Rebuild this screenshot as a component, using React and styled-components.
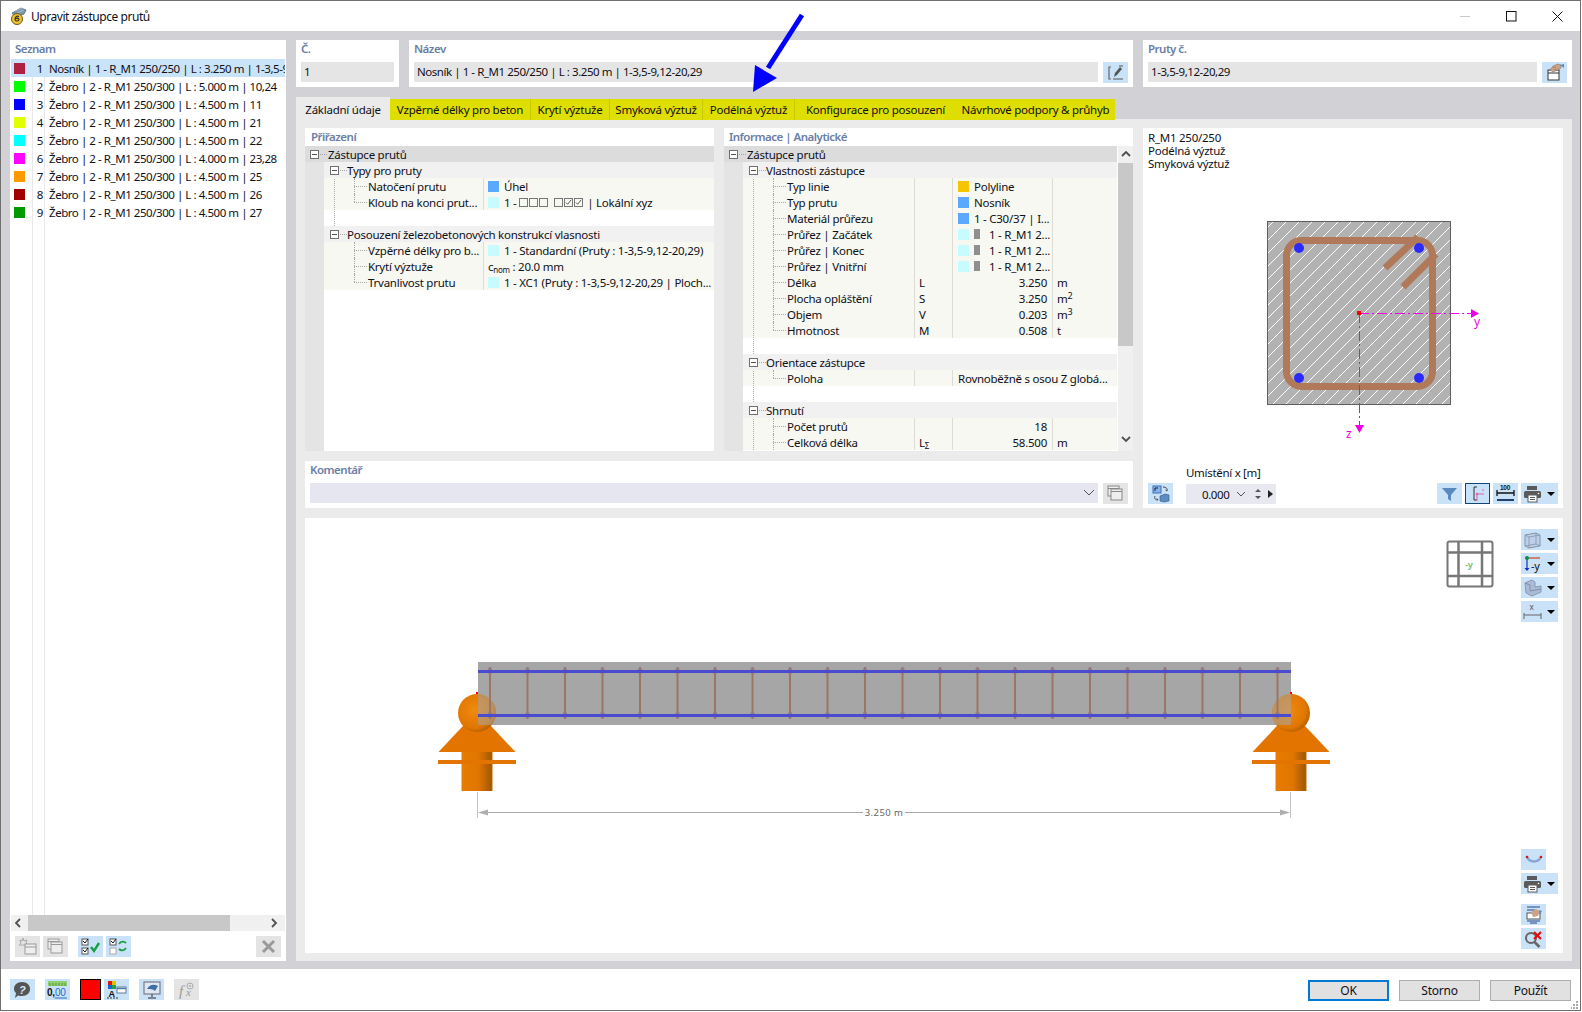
import React from "react";
import styled, { createGlobalStyle } from "styled-components";

const Global = createGlobalStyle`
  html, body { margin: 0; padding: 0; background: #fff; }
  body { font-family: "Noto Sans", "Open Sans", sans-serif; font-size: 11.5px; letter-spacing: -0.25px; color: #101018; }
  * { box-sizing: border-box; }
`;

const Win = styled.div`
  position: relative;
  width: 1581px;
  height: 1011px;
  border: 1px solid #6f6f6f;
  background: #fff;
  display: flex;
  flex-direction: column;
  overflow: hidden;
`;
const TitleBar = styled.header`
  height: 30px;
  display: flex;
  align-items: center;
  padding-left: 8px;
  gap: 4px;
  font-size: 12px;
  letter-spacing: -0.45px;
  flex: none;
`;
const WinBtns = styled.div`
  margin-left: auto;
  display: flex;
`;
const WinBtn = styled.div`
  width: 46px;
  height: 30px;
  display: flex;
  align-items: center;
  justify-content: center;
`;
const Body = styled.main`
  flex: 1;
  min-height: 0;
  background: #d1d1d6;
  padding: 9px 8px 8px 9px;
  display: grid;
  grid-template-columns: 276px 1fr;
  gap: 10px;
`;
const ListPanel = styled.section`
  background: #fff;
  display: flex;
  flex-direction: column;
  min-height: 0;
  padding: 0 1px;
`;
const Heading = styled.div`
  font-weight: 600;
  font-size: 11.5px;
  letter-spacing: -0.5px;
  color: #6a7ea6;
  height: ${(p) => p.$h || 22}px;
  line-height: ${(p) => p.$lh || p.$h || 18}px;
  padding-left: ${(p) => p.$pad ?? 0}px;
  flex: none;
`;
const ListBody = styled.div`
  flex: 1;
  min-height: 0;
  background-image: linear-gradient(#e8e8e8, #e8e8e8), linear-gradient(#e8e8e8, #e8e8e8);
  background-size: 1px 100%, 1px 100%;
  background-repeat: no-repeat;
  background-position: 21px 0, 33px 0;
  overflow: hidden;
`;
const ListRow = styled.div`
  height: 18px;
  display: grid;
  grid-template-columns: 22px 10px 1fr;
  align-items: center;
  white-space: nowrap;
  overflow: hidden;
  background: ${(p) => (p.$sel ? "#c9e3f8" : "transparent")};
`;
const ColorChip = styled.span`
  width: 11px;
  height: 11px;
  margin-left: 3px;
  background: ${(p) => p.$c};
`;
const ListNum = styled.span`
  text-align: right;
`;
const ListText = styled.span`
  padding-left: 6px;
  overflow: hidden;
  letter-spacing: -0.45px;
`;
const HScroll = styled.div`
  height: 16px;
  flex: none;
  background: #f0f0f0;
  display: flex;
  align-items: center;
  justify-content: space-between;
  padding: 0 4px;
  position: relative;
`;
const HThumb = styled.div`
  position: absolute;
  left: 17px;
  top: 0;
  width: 202px;
  height: 16px;
  background: #c8c8c8;
`;
const ListTools = styled.div`
  flex: none;
  height: 30px;
  padding: 5px 4px 4px;
  display: flex;
  gap: 3px;
`;
const Tool = styled.div`
  flex: none;
  width: ${(p) => (p.$wide ? 37 : 25)}px;
  height: 21px;
  background: ${(p) => (p.$muted ? "#e4e4e4" : "#c9e2f7")};
  border: ${(p) => (p.$on ? "1px solid #11457e" : "none")};
  margin-left: ${(p) => p.$ml || 0}px;
  margin-top: ${(p) => p.$mt || 0}px;
  display: flex;
  align-items: center;
  justify-content: ${(p) => (p.$wide ? "flex-start" : "center")};
  padding-left: ${(p) => (p.$wide ? 2 : 0)}px;
`;
const Caret = styled.span`
  width: 0;
  height: 0;
  margin-left: 5px;
  border-left: 4px solid transparent;
  border-right: 4px solid transparent;
  border-top: 4px solid #000;
`;
const MainCol = styled.div`
  display: flex;
  flex-direction: column;
  min-width: 0;
  min-height: 0;
`;
const TopRow = styled.div`
  display: grid;
  grid-template-columns: 103px 724px 429px;
  gap: 10px;
  height: 47px;
  flex: none;
`;
const Field = styled.div`
  background: #fff;
  padding: 0 5px;
`;
const FieldLine = styled.div`
  display: flex;
  gap: 5px;
  height: 21px;
`;
const Input = styled.div`
  flex: 1;
  min-width: 0;
  height: 20px;
  line-height: 20px;
  padding-left: 3px;
  letter-spacing: -0.45px;
  background: ${(p) => p.$bg || "#e5e5e5"};
  display: flex;
  align-items: center;
  justify-content: space-between;
  white-space: nowrap;
`;
const Tabs = styled.nav`
  display: flex;
  align-items: flex-end;
  height: 23px;
  margin-top: 10px;
  margin-bottom: -1px;
  flex: none;
  position: relative;
  z-index: 1;
`;
const Tab = styled.div`
  height: ${(p) => (p.$active ? 23 : 21)}px;
  width: ${(p) => p.$w}px;
  flex: none;
  line-height: ${(p) => (p.$active ? 23 : 21)}px;
  padding-top: ${(p) => (p.$active ? 1 : 0)}px;
  text-align: center;
  white-space: nowrap;
  background: ${(p) => (p.$active ? "#ebebeb" : "#dede00")};
  border-right: ${(p) => (p.$line ? "1px solid #c9c900" : "none")};
`;
const TabBody = styled.div`
  flex: 1;
  min-height: 0;
  background: #ebebeb;
  padding: 9px 9px 7px;
  display: grid;
  grid-template-rows: 380px 435px;
  gap: 10px;
`;
const UpperGrid = styled.div`
  display: grid;
  grid-template-columns: 828px 420px;
  gap: 10px;
  min-height: 0;
`;
const LeftStack = styled.div`
  display: grid;
  grid-template-rows: 323px 47px;
  gap: 10px;
  min-height: 0;
`;
const PanelPair = styled.div`
  display: grid;
  grid-template-columns: 409px 409px;
  gap: 10px;
  min-height: 0;
`;
const TreePanel = styled.section`
  background: #fff;
  display: flex;
  flex-direction: column;
  min-height: 0;
  overflow: hidden;
`;
const TreeWrap = styled.div`
  flex: 1;
  min-height: 0;
  display: flex;
`;
const TreeMain = styled.div`
  flex: 1;
  min-width: 0;
  display: flex;
  flex-direction: column;
  overflow: hidden;
`;
const RootRow = styled.div`
  height: 16px;
  flex: none;
  line-height: 15px;
  padding-top: 1px;
  background: #dcdcdc;
  display: flex;
  align-items: center;
  padding-left: 5px;
  gap: 1px;
  white-space: nowrap;
`;
const Expander = styled.span`
  width: 9px;
  height: 9px;
  border: 1px solid #707070;
  background: #fff;
  position: relative;
  flex: none;
  margin: -1px 8px 0 0;
  &::before {
    content: "";
    position: absolute;
    left: 1px;
    top: 3px;
    width: 5px;
    height: 1px;
    background: #505050;
  }
  &::after {
    content: "";
    position: absolute;
    left: 9px;
    top: 3px;
    width: 7px;
    border-top: 1px dotted #a8a8a8;
  }
`;
const Sub = styled.div`
  flex: 1;
  min-height: 0;
  background: #e4e4e4;
  padding-left: 19px;
  display: flex;
`;
const SubInner = styled.div`
  flex: 1;
  min-width: 0;
  background: #fff;
  position: relative;
  overflow: hidden;
  &::before {
    content: "";
    position: absolute;
    left: 10px;
    top: 0;
    height: ${(p) => p.$line}px;
    border-left: 1px dotted #a8a8a8;
    z-index: 1;
  }
`;
const SectionHead = styled.div`
  height: 16px;
  line-height: 15px;
  padding: 1px 0 0 6px;
  background: #f1f1f1;
  display: flex;
  align-items: center;
  white-space: nowrap;
  position: relative;
  z-index: 2;
`;
const Row = styled.div`
  height: 16px;
  display: grid;
  grid-template-columns: ${(p) => p.$cols};
  background: #f7f8f2;
  position: relative;
  white-space: nowrap;
  &::before {
    content: "";
    position: absolute;
    left: 30px;
    top: 0;
    height: ${(p) => (p.$last ? 8 : 16)}px;
    border-left: 1px dotted #a8a8a8;
  }
  &::after {
    content: "";
    position: absolute;
    left: 30px;
    top: 8px;
    width: 13px;
    border-top: 1px dotted #a8a8a8;
  }
`;
const Cell = styled.div`
  line-height: 15px;
  padding: 1px ${(p) => (p.$right ? 5 : 0)}px 0 ${(p) => p.$pl ?? 4}px;
  text-align: ${(p) => (p.$right ? "right" : "left")};
  border-right: ${(p) => (p.$noline ? "none" : "1px solid #dcdcd4")};
  display: flex;
  align-items: center;
  justify-content: ${(p) => (p.$right ? "flex-end" : "flex-start")};
  overflow: hidden;
  grid-column: ${(p) => (p.$span ? `span ${p.$span}` : "auto")};
`;
const Chip = styled.span`
  width: 11px;
  height: 11px;
  flex: none;
  background: ${(p) => p.$c};
  margin: -1px ${(p) => p.$mr ?? 5}px 0 0;
`;
const Bar = styled.span`
  width: 6px;
  height: 10px;
  flex: none;
  background: #8f8f8f;
  margin: -1px 9px 0 5px;
`;
const Gap = styled.div`
  height: 16px;
`;
const Box = styled.span`
  width: 9px;
  height: 9px;
  border: 1px solid #777;
  flex: none;
  margin-top: -1px;
  margin-right: ${(p) => p.$mr || 1}px;
  display: inline-flex;
  align-items: center;
  justify-content: center;
`;
const Small = styled.span`
  font-size: ${(p) => (p.$up ? 9 : 8)}px;
  position: relative;
  top: ${(p) => (p.$up ? -4 : 2)}px;
`;
const VScroll = styled.div`
  width: 15px;
  margin-left: 1px;
  flex: none;
  background: #f0f0f0;
  display: flex;
  flex-direction: column;
  align-items: center;
  justify-content: space-between;
  position: relative;
  padding: 5px 0 5px;
`;
const VThumb = styled.div`
  position: absolute;
  left: 0;
  top: 17px;
  width: 15px;
  height: 183px;
  background: #c8c8c8;
`;
const Preview = styled.section`
  background: #fff;
  display: flex;
  flex-direction: column;
  min-height: 0;
`;
const Caption = styled.div`
  padding: 3px 5px 0;
  line-height: 13px;
  height: 43px;
  flex: none;
`;
const Drawing = styled.svg`
  display: block;
  width: 420px;
  height: 295px;
  flex: none;
`;
const PreviewFoot = styled.div`
  height: 42px;
  min-height: 0;
  flex: none;
  display: flex;
  align-items: flex-end;
  padding: 0 5px 4px;
`;
const SpinWrap = styled.div`
  margin-left: 13px;
  display: flex;
  flex-direction: column;
`;
const SpinLabel = styled.div`
  line-height: 17px;
  height: 20px;
  letter-spacing: -0.3px;
`;
const Spin = styled.div`
  width: 90px;
  height: 20px;
  background: #e8e8f0;
  display: flex;
  align-items: center;
  padding-left: 16px;
  gap: 8px;
  letter-spacing: -0.4px;
`;
const FootTools = styled.div`
  margin-left: auto;
  display: flex;
  gap: 3px;
`;
const ViewPanel = styled.section`
  background: #fff;
  position: relative;
  min-height: 0;
`;
const BeamSvg = styled.svg`
  display: block;
  width: 1258px;
  height: 435px;
`;
const FloatTools = styled.div`
  position: absolute;
  right: 5px;
  ${(p) => (p.$bottom ? "bottom: 4px;" : "top: 11px;")}
  display: flex;
  flex-direction: column;
  gap: 3px;
  width: 37px;
`;
const CubeFloat = styled.svg`
  position: absolute;
  left: 1141px;
  top: 22px;
`;
const Footer = styled.footer`
  height: 41px;
  flex: none;
  display: flex;
  align-items: flex-start;
  padding: 10px 9px 0 9px;
  position: relative;
`;
const FootLeft = styled.div`
  display: flex;
  gap: 10px;
`;
const RedSwatch = styled.div`
  width: 21px;
  height: 21px;
  background: #ff0000;
  border: 1px solid #000;
  margin-right: -7px;
`;
const FootRight = styled.div`
  margin-left: auto;
  display: flex;
  gap: 10px;
  margin-top: 1px;
`;
const DlgBtn = styled.div`
  width: 81px;
  height: 21px;
  background: #e1e1e1;
  border: ${(p) => (p.$primary ? "2px solid #0078d7" : "1px solid #adadad")};
  font-size: 12px;
  display: flex;
  align-items: center;
  justify-content: center;
`;
const Grip = styled.svg`
  position: absolute;
  right: 1px;
  bottom: 1px;
`;
const ArrowLayer = styled.svg`
  position: absolute;
  left: 0;
  top: 0;
  pointer-events: none;
  z-index: 5;
`;

/* ---- icons ---- */
const S = ({ w = 21, h = 19, children }) => (
  <svg width={w} height={h} viewBox={`0 0 ${w} ${h}`} fill="none">{children}</svg>
);
const Chev = ({ d, c = "#505050" }) => {
  const p = { l: "M5 1 1 5l4 4", r: "M1 1l4 4-4 4", u: "M1 5l4-4 4 4", d: "M1 1l4 4 4-4" }[d];
  return <svg width="10" height="10" viewBox="0 0 10 10" fill="none" style={{ flex: "none" }}><path d={p} stroke={c} strokeWidth="1.8" /></svg>;
};
const AppIcon = () => (
  <svg width="18" height="18" viewBox="0 0 18 18" fill="none" style={{ flex: "none" }}>
    <path d="M3 6 12 1l5 2-2 4-9 3z" fill="#7d97ad" stroke="#3c5a70" strokeWidth=".7" />
    <path d="M6 4l8-3M8 6l7-3" stroke="#c8d6e2" strokeWidth=".6" />
    <circle cx="8" cy="12" r="5.500" fill="#f0c22c" stroke="#6e5a18" />
    <path d="M10 9.500c-2.500-1-4 .5-4 3 0 2 4 2 4 0s-3-1.500-4-.5" stroke="#2a2a2a" strokeWidth="1.100" />
  </svg>
);
const EditIco = () => (
  <S><path d="M6 4H4v12h2" stroke="#666" strokeWidth="1.2" /><path d="M9 14l1-4 5-6 2 2-5 6z" fill="#555" /><path d="M8 16h10M14 3h4" stroke="#555" /></S>
);
const HandIco = () => (
  <S>
    <rect x="4" y="7" width="11" height="10" fill="#fff" stroke="#333" />
    <path d="M4 10h11" stroke="#333" />
    <path d="M6 7l3-4 5-2 3 1v3l-3 2-5 2z" fill="#c9a48a" stroke="#7a6656" strokeWidth=".5" />
    <path d="M9 5l3-1M10 7l3-1" stroke="#7a6656" strokeWidth=".5" />
    <path d="M16 2l4-1v4z" fill="#5c84c8" />
  </S>
);
const CopyIco = ({ c = "#9a9a9a" }) => (
  <S><rect x="3" y="2" width="11" height="10" fill="#eee" stroke={c} /><rect x="6" y="5" width="11" height="11" fill="#eee" stroke={c} /><path d="M3 4.500h11M6 7.500h11" stroke={c} /></S>
);
const NewIco = () => (
  <S><path d="M6 1l1 3 3-1-1 3 2 2H2l2-2-1-3 2 1z" fill="none" stroke="#aaa" /><rect x="8" y="7" width="11" height="10" fill="#eee" stroke="#999" /><path d="M8 10h11" stroke="#999" /></S>
);
const CheckPair = ({ swap }) => (
  <S>
    <rect x="2" y="2" width="6" height="6" fill="#fff" stroke="#555" />
    <path d="M3 4l2 2 3-4" stroke="#111" />
    <rect x="2" y="11" width="6" height="6" fill="#fff" stroke={swap ? "#aaa" : "#555"} />
    {!swap && <path d="M3 13l2 2 3-4" stroke="#111" />}
    {swap ? <path d="M11 7c2-3 5-3 7-1M18 11c-2 3-5 3-7 1" stroke="#19a040" strokeWidth="1.800" /> : <path d="M11 10l3 4 5-8" stroke="#19a040" strokeWidth="2.400" />}
  </S>
);
const XIco = () => (
  <S><path d="M5 4l11 11M16 4 5 15" stroke="#9a9a9a" strokeWidth="3" /></S>
);
const SwapIco = () => (
  <S>
    <rect x="3" y="2" width="8" height="7" fill="#8ab0e8" stroke="#3f6fb8" />
    <path d="M5 7V4h3" stroke="#123" />
    <path d="M13 3c3 0 5 2 4 4l-1.500-1M5 12c-1 2 0 4 3 4l-1-1.500" stroke="#444" />
    <path d="M10 12l5-2 4 1v6l-5 1-4-1z" fill="#5e8cc0" stroke="#34597f" strokeWidth=".6" />
  </S>
);
const FunnelIco = () => (
  <S><path d="M3 4h15l-6 7v6l-3-2v-4z" fill="#5b88c0" /></S>
);
const AxisIco = () => (
  <S><path d="M10 3H7v13h3" stroke="#333" /><path d="M10 10h7M10 10v7" stroke="#e35fb0" /><path d="M16 5v2" stroke="#e35fb0" /><circle cx="10" cy="10" r="1.200" fill="#e35fb0" /></S>
);
const DimIco = () => (
  <svg width="21" height="19" viewBox="0 0 21 19" fill="none">
    <text x="5" y="6" fontSize="6.500" fontWeight="700" fill="#111" fontFamily="Liberation Sans, sans-serif">100</text>
    <path d="M2 9h17M2 6v6M19 6v6" stroke="#111" strokeWidth="1.300" />
    <path d="M2 16h17" stroke="#24406e" strokeWidth="2" />
  </svg>
);
const PrintIco = () => (
  <svg width="19" height="18" viewBox="0 0 19 18" fill="none" style={{ flex: "none" }}>
    <rect x="4" y="1" width="10" height="4" fill="#5a5a5a" />
    <rect x="1" y="6" width="17" height="7" rx="1.500" fill="#5a5a5a" />
    <rect x="5" y="10" width="9" height="7" fill="#fff" stroke="#5a5a5a" />
    <path d="M7 12.500h5M7 14.500h5" stroke="#5a5a5a" />
    <circle cx="15.500" cy="8.500" r=".8" fill="#fff" />
  </svg>
);
const CubeIco = () => (
  <svg width="19" height="18" viewBox="0 0 19 18" fill="none" style={{ flex: "none" }}>
    <path d="M2 4l11-2 4 2v11l-11 2-4-2z" fill="#b4c4de" fillOpacity=".6" stroke="#8494ac" />
    <path d="M2 4l4 2 11-2M6 6v11M2 15l11-2 4 2M13 2v11" stroke="#8494ac" strokeWidth=".8" />
  </svg>
);
const AxisYIco = () => (
  <svg width="19" height="18" viewBox="0 0 19 18" style={{ flex: "none" }}>
    <path d="M4 3h13" stroke="#d0401c" strokeWidth="1.200" />
    <path d="M4 3v12" stroke="#1030c0" strokeWidth="1.200" />
    <circle cx="4" cy="3" r="2" fill="#108c40" />
    <path d="M1.500 13h5L4 16z" fill="#1030c0" />
    <text x="8" y="15" fontSize="11" fill="#111" fontFamily="Noto Sans, sans-serif">-y</text>
  </svg>
);
const SolidIco = () => (
  <svg width="19" height="18" viewBox="0 0 19 18" fill="none" style={{ flex: "none" }}>
    <path d="M2 4l7-3 3 2v5l6-1v6l-9 4-6-3z" fill="#a9bbd6" stroke="#8a9ab4" />
    <path d="M2 4l5 2v6M7 12l11-2" stroke="#7f90aa" />
  </svg>
);
const DimXIco = () => (
  <svg width="19" height="18" viewBox="0 0 19 18" fill="none" style={{ flex: "none" }}>
    <text x="6.500" y="7" fontSize="8" fill="#555" fontFamily="Noto Sans, sans-serif">x</text>
    <path d="M1 10v6M18 10v6M1 12h17" stroke="#666" />
  </svg>
);
const BendIco = () => (
  <S><path d="M4 7c3 6 11 6 14 0" stroke="#8aa4d4" strokeWidth="2.500" /><circle cx="4" cy="7" r="1.300" fill="#d01818" /><circle cx="18" cy="7" r="1.300" fill="#d01818" /></S>
);
const HandLinesIco = () => (
  <S><path d="M4 2h13M4 5h8M4 16h13M7 18h7" stroke="#24408a" /><rect x="4" y="8" width="13" height="6" fill="#fff" stroke="#555" /><path d="M8 7l5-3 4 2-2 5-5 1z" fill="#c9a48a" /><path d="M16 5l3 1-2 3z" fill="#5c84c8" /></S>
);
const ZoomXIco = () => (
  <S><circle cx="8" cy="9" r="5" fill="none" stroke="#666" strokeWidth="2" /><path d="M11.500 13l5 5" stroke="#666" strokeWidth="2.500" /><path d="M11 3l7 7M18 3l-7 7" stroke="#e01010" strokeWidth="2.200" /></S>
);
const HelpIco = () => (
  <svg width="21" height="19" viewBox="0 0 21 19">
    <path d="M10 2c5 0 8 3 8 7s-3 7-8 7c-1 0-3 0-4-.5L3 18l1-5C3 12 2 11 2 9c0-4 3-7 8-7z" fill="#555" />
    <text x="7" y="13.500" fontSize="11" fontWeight="700" fontStyle="italic" fill="#d8e8f4" fontFamily="Liberation Sans, sans-serif">?</text>
  </svg>
);
const NumIco = () => (
  <svg width="21" height="19" viewBox="0 0 21 19">
    <rect x="1" y="1" width="19" height="5" fill="#8fce6c" />
    <path d="M3 3v3M6 3v3M9 3v3M12 3v3M15 3v3M18 3v3" stroke="#5a9a40" />
    <text x="0" y="16" fontSize="10" fontWeight="700" fill="#111" fontFamily="Liberation Sans, sans-serif">0,</text>
    <text x="8" y="16" fontSize="10" fill="#2a6ad0" fontFamily="Liberation Sans, sans-serif">00</text>
    <path d="M8 18h12" stroke="#2a6ad0" />
  </svg>
);
const PaletteIco = () => (
  <svg width="21" height="19" viewBox="0 0 21 19">
    <rect x="2" y="1" width="4" height="4" fill="#d81818" />
    <rect x="6" y="1" width="4" height="4" fill="#e8c000" />
    <rect x="2" y="5" width="4" height="4" fill="#2060d0" />
    <rect x="6" y="5" width="4" height="4" fill="#20a040" />
    <rect x="11" y="7" width="9" height="6" fill="#fff" stroke="#5a7aa0" />
    <path d="M11 8.500h9" stroke="#5a7aa0" strokeWidth="1.500" />
    <text x="2.500" y="17" fontSize="9" fontWeight="700" fill="#111" fontFamily="Liberation Sans, sans-serif">A</text>
    <path d="M1 18h11" stroke="#333" strokeDasharray="2 1" />
  </svg>
);
const MonitorIco = () => (
  <S>
    <rect x="3" y="2" width="16" height="12" fill="#dfe8f2" stroke="#667" />
    <path d="M6 9c3-5 7-5 11-3l-3 5c-2-2-5-2-8-2z" fill="#3f6ea4" />
    <path d="M11 14v3M7 18h8" stroke="#667" strokeWidth="1.500" />
  </S>
);
const FxIco = () => (
  <svg width="21" height="19" viewBox="0 0 21 19">
    <text x="3" y="16" fontSize="15" fontStyle="italic" fontFamily="Liberation Serif, serif" fill="#999">f</text>
    <text x="10" y="16" fontSize="11" fontStyle="italic" fontFamily="Liberation Serif, serif" fill="#999">x</text>
    <circle cx="14" cy="6" r="3" fill="none" stroke="#aaa" />
    <circle cx="14" cy="6" r="1" fill="#aaa" />
  </svg>
);
const Tick = () => (
  <svg width="7" height="7" viewBox="0 0 8 8" fill="none" style={{ flex: "none" }}><path d="M1 4l2 2 4-5" stroke="#444" strokeWidth="1" /></svg>
);

/* ---- data ---- */
const members = [
  ["#b02040", "Nosník | 1 - R_M1 250/250 | L : 3.250 m | 1-3,5-9,12-20,29"],
  ["#00ff00", "Žebro | 2 - R_M1 250/300 | L : 5.000 m | 10,24"],
  ["#0000ff", "Žebro | 2 - R_M1 250/300 | L : 4.500 m | 11"],
  ["#e0ff00", "Žebro | 2 - R_M1 250/300 | L : 4.500 m | 21"],
  ["#00ffff", "Žebro | 2 - R_M1 250/300 | L : 4.500 m | 22"],
  ["#ff00ff", "Žebro | 2 - R_M1 250/300 | L : 4.000 m | 23,28"],
  ["#ff9900", "Žebro | 2 - R_M1 250/300 | L : 4.500 m | 25"],
  ["#a00000", "Žebro | 2 - R_M1 250/300 | L : 4.500 m | 26"],
  ["#009900", "Žebro | 2 - R_M1 250/300 | L : 4.500 m | 27"],
];
const tabs = [
  ["Vzpěrné délky pro beton", 141, 1],
  ["Krytí výztuže", 79, 1],
  ["Smyková výztuž", 93, 1],
  ["Podélná výztuž", 92, 1],
  ["Konfigurace pro posouzení", 161, 0],
  ["Návrhové podpory & průhyb", 159, 0],
];
const LCOLS = "160px 1fr";
const ICOLS = "172px 38px 100px 1fr";
const BLUE = "#5aa9ff";
const CYAN = "#c8fbfd";

const LabelCell = ({ children }) => <Cell $pl={44}>{children}</Cell>;

const InfoRow = ({ label, sym, val, unit, chip, bar, last, left, wide }) => (
  <Row $cols={ICOLS} $last={last}>
    <LabelCell>{label}</LabelCell>
    <Cell>{sym}</Cell>
    {left ? (
      <Cell $pl={5} $span={wide ? 2 : 0} $noline={wide}>
        {chip && <Chip $c={chip} />}
        {bar && <><Chip $c={CYAN} $mr={0} /><Bar /></>}
        {val}
      </Cell>
    ) : (
      <Cell $right>{val}</Cell>
    )}
    {!wide && <Cell $noline>{unit}</Cell>}
  </Row>
);

const Beam = () => {
  const X = Array.from({ length: 22 }, (_, i) => 490 + 37.5 * i);
  const support = (cx) => (
    <g key={cx}>
      <path d={`M${cx - 38.500} 752H${cx + 38.500}L${cx} 711z`} fill="#e37400" />
      <rect x={cx - 15.500} y="752" width="31" height="39" fill={`url(#shaft)`} />
      <rect x={cx - 39} y="760" width="78" height="4" fill="#e37400" />
      <circle cx={cx} cy="713" r="19" fill="url(#ball)" />
      <rect x={cx - 1} y="692" width="2" height="2" fill="#ff0000" />
    </g>
  );
  return (
    <BeamSvg viewBox="305 518 1258 435">
      <defs>
        <linearGradient id="shaft" x1="0" x2="1" y1="0" y2="0">
          <stop offset="0" stopColor="#e87c00" />
          <stop offset=".55" stopColor="#e07600" />
          <stop offset=".95" stopColor="#a45800" />
          <stop offset="1" stopColor="#c06800" />
        </linearGradient>
        <radialGradient id="ball" cx=".42" cy=".42" r=".6">
          <stop offset="0" stopColor="#f08a10" />
          <stop offset=".8" stopColor="#e07600" />
          <stop offset="1" stopColor="#b86200" />
        </radialGradient>
        <clipPath id="bm"><rect x="478" y="662" width="813" height="63" /></clipPath>
      </defs>
      <rect x="478" y="662" width="813" height="63" fill="#a6a6a6" />
      {support(477)}
      {support(1291)}
      <g clipPath="url(#bm)">
        <circle cx="477" cy="713" r="19" fill="#a6a6a6" opacity=".55" />
        <circle cx="1291" cy="713" r="19" fill="#a6a6a6" opacity=".55" />
      </g>
      {X.map((x) => (
        <g key={x}>
          <path d={`M${x} 667V719`} stroke="#9c7664" strokeWidth="2" />
          <path d={`M${x - 2} 671h4M${x - 2} 715h4`} stroke="#8d7a86" strokeWidth="5" />
        </g>
      ))}
      <path d="M478 671.500H1291M478 715.500H1291" stroke="#4b4bcf" strokeWidth="3" />
      <path d="M477.500 792V818M1290.500 792V818" stroke="#c4c4c4" />
      <path d="M482 812.500H1286" stroke="#a8a8a8" />
      <path d="M478 812.500l10-3v6zM1290 812.500l-10-3v6z" fill="#b0b0b0" />
      <rect x="863" y="805" width="42" height="14" fill="#fff" />
      <text x="884" y="816" textAnchor="middle" fontSize="9.500" letterSpacing=".4" fill="#666" fontFamily="Noto Sans, sans-serif">3.250 m</text>
    </BeamSvg>
  );
};

const SectionView = () => (
  <Drawing viewBox="1143 171 420 295">
    <defs>
      <pattern id="hatch" patternUnits="userSpaceOnUse" width="13" height="13">
        <rect width="13" height="13" fill="#b2b2b2" />
        <path d="M-1 14 14 -1M-1 1 1 -1M12 14l2-2" stroke="#fff" strokeWidth="1" />
      </pattern>
    </defs>
    <rect x="1267.500" y="221.500" width="183" height="183" fill="url(#hatch)" stroke="#606060" />
    <rect x="1286.500" y="240.500" width="146" height="146" rx="15" fill="none" stroke="#b07a5a" strokeWidth="7" />
    <path d="M1385 268 1418 237M1403 287 1436 254" stroke="#b07a5a" strokeWidth="7" />
    <circle cx="1299" cy="248" r="5" fill="#2a2aff" />
    <circle cx="1419" cy="248" r="5" fill="#2a2aff" />
    <circle cx="1299" cy="378" r="5" fill="#2a2aff" />
    <circle cx="1419" cy="378" r="5" fill="#2a2aff" />
    <path d="M1359 313.500H1472M1359.500 313V426" stroke="#f000e8" strokeWidth="1" strokeDasharray="10 3 2 3" />
    <path d="M1471 309v9l8-4.500zM1355 425h9l-4.500 8z" fill="#f000e8" />
    <rect x="1357" y="311" width="4" height="4" fill="#ff0000" />
    <text x="1474" y="326" fontSize="12" fill="#f000e8" fontFamily="Noto Sans, sans-serif">y</text>
    <text x="1346" y="438" fontSize="12" fill="#f000e8" fontFamily="Noto Sans, sans-serif">z</text>
  </Drawing>
);

export default function App() {
  return (
    <>
      <Global />
      <Win>
        <TitleBar>
          <AppIcon />
          Upravit zástupce prutů
          <WinBtns>
            <WinBtn><svg width="11" height="11"><path d="M0 5.500h10" stroke="#c8c8c8" /></svg></WinBtn>
            <WinBtn><svg width="11" height="11"><rect x=".5" y=".5" width="9.500" height="9.500" fill="none" stroke="#111" /></svg></WinBtn>
            <WinBtn><svg width="11" height="11"><path d="M.5.5l10 10M10.500.5l-10 10" stroke="#111" /></svg></WinBtn>
          </WinBtns>
        </TitleBar>
        <Body>
          <ListPanel>
            <Heading $h={19} $lh={17} $pad={4}>Seznam</Heading>
            <ListBody>
              {members.map(([c, t], i) => (
                <ListRow key={i} $sel={i === 0}>
                  <ColorChip $c={c} />
                  <ListNum>{i + 1}</ListNum>
                  <ListText>{t}</ListText>
                </ListRow>
              ))}
            </ListBody>
            <HScroll>
              <HThumb />
              <Chev d="l" />
              <Chev d="r" />
            </HScroll>
            <ListTools>
              <Tool $muted><NewIco /></Tool>
              <Tool $muted><CopyIco /></Tool>
              <Tool $ml={7}><CheckPair /></Tool>
              <Tool><CheckPair swap /></Tool>
              <Tool $muted $ml={122}><XIco /></Tool>
            </ListTools>
          </ListPanel>
          <MainCol>
            <TopRow>
              <Field>
                <Heading>Č.</Heading>
                <FieldLine><Input>1</Input></FieldLine>
              </Field>
              <Field>
                <Heading>Název</Heading>
                <FieldLine>
                  <Input>Nosník | 1 - R_M1 250/250 | L : 3.250 m | 1-3,5-9,12-20,29</Input>
                  <Tool><EditIco /></Tool>
                </FieldLine>
              </Field>
              <Field>
                <Heading>Pruty č.</Heading>
                <FieldLine>
                  <Input>1-3,5-9,12-20,29</Input>
                  <Tool><HandIco /></Tool>
                </FieldLine>
              </Field>
            </TopRow>
            <Tabs>
              <Tab $active $w={94}>Základní údaje</Tab>
              {tabs.map(([t, w, l]) => (
                <Tab key={t} $w={w} $line={l}>{t}</Tab>
              ))}
            </Tabs>
            <TabBody>
              <UpperGrid>
                <LeftStack>
                  <PanelPair>
                    <TreePanel>
                      <Heading $h={18} $pad={6}>Přiřazení</Heading>
                      <TreeMain>
                        <RootRow><Expander />Zástupce prutů</RootRow>
                        <Sub>
                          <SubInner $line={64}>
                            <SectionHead><Expander />Typy pro pruty</SectionHead>
                            <Row $cols={LCOLS}>
                              <LabelCell>Natočení prutu</LabelCell>
                              <Cell $noline><Chip $c={BLUE} />Úhel</Cell>
                            </Row>
                            <Row $cols={LCOLS} $last>
                              <LabelCell>Kloub na konci prut...</LabelCell>
                              <Cell $noline>
                                <Chip $c={CYAN} />1 -&nbsp;
                                <Box /><Box /><Box $mr={6} /><Box /><Box><Tick /></Box><Box $mr={4}><Tick /></Box>
                                | Lokální xyz
                              </Cell>
                            </Row>
                            <Gap />
                            <SectionHead><Expander />Posouzení železobetonových konstrukcí vlasnosti</SectionHead>
                            <Row $cols={LCOLS}>
                              <LabelCell>Vzpěrné délky pro b...</LabelCell>
                              <Cell $noline><Chip $c={CYAN} />1 - Standardní (Pruty : 1-3,5-9,12-20,29)</Cell>
                            </Row>
                            <Row $cols={LCOLS}>
                              <LabelCell>Krytí výztuže</LabelCell>
                              <Cell $noline><span>c<Small>nom</Small></span>&nbsp;: 20.0 mm</Cell>
                            </Row>
                            <Row $cols={LCOLS} $last>
                              <LabelCell>Trvanlivost prutu</LabelCell>
                              <Cell $noline><Chip $c={CYAN} />1 - XC1 (Pruty : 1-3,5-9,12-20,29 | Ploch...</Cell>
                            </Row>
                          </SubInner>
                        </Sub>
                      </TreeMain>
                    </TreePanel>
                    <TreePanel>
                      <Heading $h={18} $pad={5}>Informace | Analytické</Heading>
                      <TreeWrap>
                        <TreeMain>
                          <RootRow><Expander />Zástupce prutů</RootRow>
                          <Sub>
                            <SubInner $line={300}>
                              <SectionHead><Expander />Vlastnosti zástupce</SectionHead>
                              <InfoRow left label="Typ linie" chip="#f6c400" val="Polyline" />
                              <InfoRow left label="Typ prutu" chip={BLUE} val="Nosník" />
                              <InfoRow left label="Materiál průřezu" chip={BLUE} val="1 - C30/37 | I..." />
                              <InfoRow left label="Průřez | Začátek" bar val="1 - R_M1 2..." />
                              <InfoRow left label="Průřez | Konec" bar val="1 - R_M1 2..." />
                              <InfoRow left label="Průřez | Vnitřní" bar val="1 - R_M1 2..." />
                              <InfoRow label="Délka" sym="L" val="3.250" unit="m" />
                              <InfoRow label="Plocha opláštění" sym="S" val="3.250" unit={<span>m<Small $up>2</Small></span>} />
                              <InfoRow label="Objem" sym="V" val="0.203" unit={<span>m<Small $up>3</Small></span>} />
                              <InfoRow last label="Hmotnost" sym="M" val="0.508" unit="t" />
                              <Gap />
                              <SectionHead><Expander />Orientace zástupce</SectionHead>
                              <InfoRow last left wide label="Poloha" val="Rovnoběžně s osou Z globá..." />
                              <Gap />
                              <SectionHead><Expander />Shrnutí</SectionHead>
                              <InfoRow label="Počet prutů" val="18" />
                              <InfoRow label="Celková délka" sym={<span>L<Small>Σ</Small></span>} val="58.500" unit="m" />
                            </SubInner>
                          </Sub>
                        </TreeMain>
                        <VScroll>
                          <VThumb />
                          <Chev d="u" />
                          <Chev d="d" />
                        </VScroll>
                      </TreeWrap>
                    </TreePanel>
                  </PanelPair>
                  <Field>
                    <Heading>Komentář</Heading>
                    <FieldLine>
                      <Input $bg="#e6e6f0">
                        <span />
                        <svg width="20" height="10" viewBox="0 0 20 10" fill="none"><path d="M6 2l5 5 5-5" stroke="#555" /></svg>
                      </Input>
                      <Tool $muted><CopyIco c="#888" /></Tool>
                    </FieldLine>
                  </Field>
                </LeftStack>
                <Preview>
                  <Caption>R_M1 250/250<br />Podélná výztuž<br />Smyková výztuž</Caption>
                  <SectionView />
                  <PreviewFoot>
                    <Tool><SwapIco /></Tool>
                    <SpinWrap>
                      <SpinLabel>Umístění x [m]</SpinLabel>
                      <Spin>
                        0.000
                        <svg width="37" height="14" viewBox="0 0 37 14" fill="none">
                          <path d="M0 5l4 4 4-4" stroke="#555" />
                          <path d="M18 5l3-3 3 3z M18 9l3 3 3-3z" fill="#555" />
                          <path d="M31 3v8l5-4z" fill="#222" />
                        </svg>
                      </Spin>
                    </SpinWrap>
                    <FootTools>
                      <Tool><FunnelIco /></Tool>
                      <Tool $on><AxisIco /></Tool>
                      <Tool><DimIco /></Tool>
                      <Tool $wide><PrintIco /><Caret /></Tool>
                    </FootTools>
                  </PreviewFoot>
                </Preview>
              </UpperGrid>
              <ViewPanel>
                <Beam />
                <CubeFloat width="48" height="48" viewBox="0 0 48 48" fill="none">
                  <rect x="1.500" y="1.500" width="45" height="45" rx="2" stroke="#777" strokeWidth="2" />
                  <path d="M12.500 1v46M36 1v46M1 12.500h46M1 36h46" stroke="#777" strokeWidth="2.500" />
                  <text x="19" y="28" fontSize="9" fontWeight="700" fill="#7fc07f" fontFamily="Noto Sans, sans-serif">-y</text>
                </CubeFloat>
                <FloatTools>
                  <Tool $wide><CubeIco /><Caret /></Tool>
                  <Tool $wide><AxisYIco /><Caret /></Tool>
                  <Tool $wide><SolidIco /><Caret /></Tool>
                  <Tool $wide><DimXIco /><Caret /></Tool>
                </FloatTools>
                <FloatTools $bottom>
                  <Tool><BendIco /></Tool>
                  <Tool $wide><PrintIco /><Caret /></Tool>
                  <Tool $mt={7}><HandLinesIco /></Tool>
                  <Tool><ZoomXIco /></Tool>
                </FloatTools>
              </ViewPanel>
            </TabBody>
          </MainCol>
        </Body>
        <Footer>
          <FootLeft>
            <Tool><HelpIco /></Tool>
            <Tool><NumIco /></Tool>
            <RedSwatch />
            <Tool><PaletteIco /></Tool>
            <Tool><MonitorIco /></Tool>
            <Tool $muted><FxIco /></Tool>
          </FootLeft>
          <FootRight>
            <DlgBtn $primary>OK</DlgBtn>
            <DlgBtn>Storno</DlgBtn>
            <DlgBtn>Použít</DlgBtn>
          </FootRight>
          <Grip width="8" height="8" viewBox="0 0 8 8">
            <path d="M5 0h2v2H5zM2 3h2v2H2zM5 3h2v2H5zM-1 6h2v2h-2zM2 6h2v2H2zM5 6h2v2H5z" fill="#a8a8a8" />
          </Grip>
        </Footer>
        <ArrowLayer width="1580" height="100" viewBox="1 1 1580 100">
          <path d="M802 15 768 68" stroke="#0000ff" strokeWidth="5" />
          <path d="M753 92 755 65 777 78z" fill="#0000ff" />
        </ArrowLayer>
      </Win>
    </>
  );
}
